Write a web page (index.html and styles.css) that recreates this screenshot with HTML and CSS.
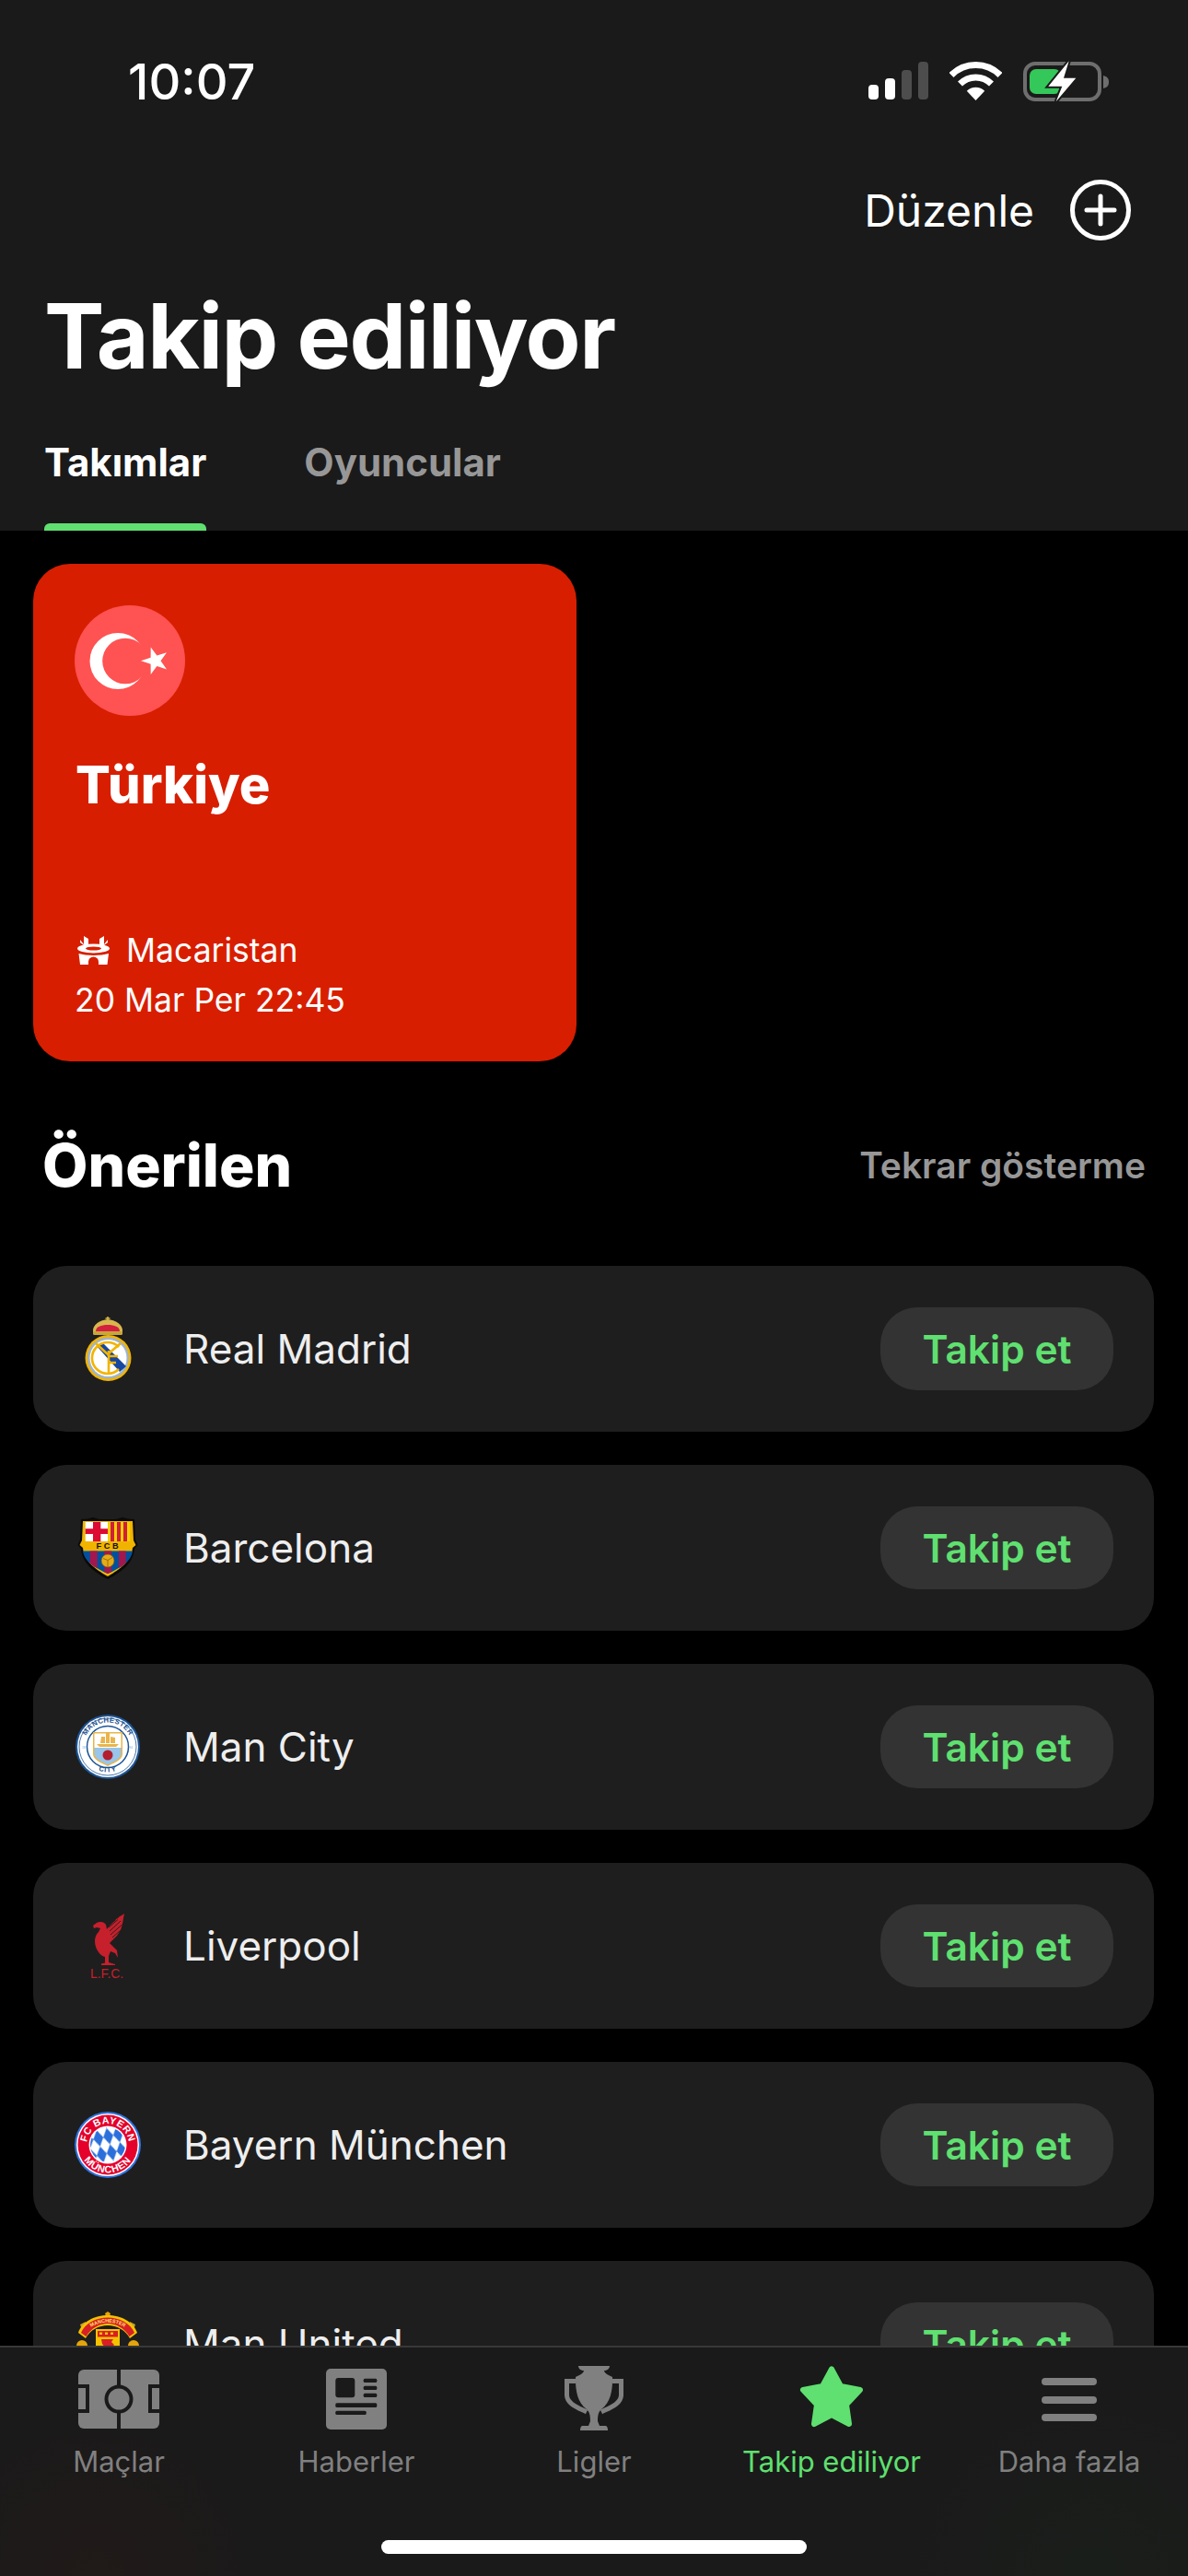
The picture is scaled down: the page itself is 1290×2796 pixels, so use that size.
FILE: index.html
```html
<!DOCTYPE html>
<html>
  <head>
    <title>Takip ediliyor</title>
    <link rel="stylesheet" href="styles.css">
  </head>
  <body>
    <div class="screen">
      <div class="header">
        <div class="status-bar">
          <span class="clock">10:07</span>
          <div class="status-icons">
            <svg class="signal" width="65" height="42" viewBox="0 0 65 42">
              <rect x="0" y="25" width="11" height="16" rx="4" fill="#fff"/>
              <rect x="18" y="18" width="11" height="23" rx="4" fill="#fff"/>
              <rect x="36" y="9" width="11" height="32" rx="4" fill="#4d4d4d"/>
              <rect x="54" y="0" width="11" height="41" rx="4" fill="#4d4d4d"/>
            </svg>
            <svg class="wifi" width="57" height="42" viewBox="0 0 57 42">
              <g fill="none" stroke="#fff" stroke-width="7">
                <path d="M2 14.500A37.500 37.500 0 0 1 55 14.500"/>
                <path d="M11.500 24A24 24 0 0 1 45.500 24"/>
              </g>
              <path d="M28.500 42L18.800 31.800A13.500 13.500 0 0 1 38.200 31.800Z" fill="#fff"/>
            </svg>
            <svg class="battery" width="93" height="45" viewBox="0 0 93 45">
              <rect x="2" y="3" width="81" height="39" rx="11" fill="none" stroke="#6e6e6e" stroke-width="4"/>
              <path d="M87 16C91 17 93 19 93 23C93 27 91 29 87 30Z" fill="#6e6e6e"/>
              <rect x="7" y="9" width="34" height="27" rx="7" fill="#34c759"/>
              <path d="M49.700 .3L27.300 27.700H42.300L35.700 44.300L57.300 18.700H44Z" fill="#fff" stroke="#1a1a1a" stroke-width="4" paint-order="stroke"/>
            </svg>
          </div>
        </div>
        <div class="header-actions">
          <span class="edit-link">Düzenle</span>
          <svg width="66" height="66" viewBox="0 0 66 66">
            <circle cx="33" cy="33" r="30.500" fill="none" stroke="#fff" stroke-width="5"/>
            <path d="M33 18V48M18 33H48" stroke="#fff" stroke-width="5" stroke-linecap="round"/>
          </svg>
        </div>
        <h1 class="page-title">Takip ediliyor</h1>
        <div class="tabs">
          <div class="tab tab-active">Takımlar<span class="tab-line"></span></div>
          <div class="tab">Oyuncular<span class="tab-line tab-line-off"></span></div>
        </div>
      </div>

      <div class="content">
        <div class="team-card">
          <svg class="flag" width="120" height="120" viewBox="0 0 120 120">
            <circle cx="60" cy="60" r="60" fill="#ff5252"/>
            <circle cx="47" cy="60.500" r="30.500" fill="#fff"/>
            <circle cx="55" cy="60.500" r="24.800" fill="#ff5252"/>
            <polygon points="72,60.300 82.600,56.800 82.700,45.600 89.400,54.600 100,51.200 93.500,60.300 100,69.400 89.400,66 82.700,75 82.600,63.800" fill="#fff"/>
          </svg>
          <div class="team-name">Türkiye</div>
          <div class="next-match">
            <div class="match-line">
              <svg class="stadium" width="36" height="32" viewBox="0 0 36 32">
                <path d="M7 1L12 4V10H24V4L29 1L29 10L33 5V8L29 11H7L3 8V5L7 10Z" fill="#fff"/>
                <ellipse cx="17.500" cy="14.500" rx="17.500" ry="5" fill="#fff"/>
                <ellipse cx="17.500" cy="14.500" rx="8.500" ry="2" fill="#d81e00"/>
                <path d="M1.500 20C10 22.500 25 22.500 34 20L32.500 32H23V29A5.500 5.500 0 0 0 12 29V32H3Z" fill="#fff"/>
              </svg>
              <span>Macaristan</span>
            </div>
            <div class="match-line">20 Mar Per 22:45</div>
          </div>
        </div>

        <div class="section-head">
          <h2 class="section-title">Önerilen</h2>
          <span class="section-action">Tekrar gösterme</span>
        </div>

        <div class="team-list">
          <div class="team-row">
            <svg class="crest" width="72" height="72" viewBox="0 0 72 72">
              <path d="M20 18C19 9 28 5 36 4C44 5 53 9 52 18L50 20H22Z" fill="#d8b84e"/>
              <path d="M23 17C23 12 29 10 36 10C43 10 49 12 49 17Z" fill="#d3213f"/>
              <path d="M36 1V8M33.500 3H38.500" stroke="#d8b84e" stroke-width="1.500"/>
              <rect x="20" y="17" width="32" height="4" rx="1.500" fill="#c9a63a"/>
              <circle cx="36.500" cy="46" r="25" fill="#f2b400"/>
              <circle cx="36.500" cy="46" r="22.500" fill="#9fb4cc"/>
              <circle cx="36.500" cy="46" r="20" fill="#fff"/>
              <path d="M24 33L30 29L56 55L49 61Z" fill="#17479e"/>
              <g fill="none" stroke="#f2b400" stroke-width="2.600">
                <path d="M48 34A17 17 0 1 0 48 58"/>
                <path d="M23 30L36 42L50 30"/>
                <path d="M37 38V62M37 44H47M37 51H45"/>
              </g>
            </svg>
            <span class="team-label">Real Madrid</span>
            <span class="follow-btn">Takip et</span>
          </div>

          <div class="team-row">
            <svg class="crest" width="72" height="72" viewBox="0 0 72 72">
              <path d="M7 5L14 4.500L20 3L27 5H45L52 3L58 4.500L65 5L66 27L68.500 33L65 37C64 52 52 62 36 70C20 62 8 52 7 37L3.500 33L6 27Z" fill="#0a0a0a"/>
              <path d="M9 7H63L64 28L66.500 33L63 36C62 50 50 59 36 67C22 59 10 50 9 36L5.500 33L8 28Z" fill="#f0b400"/>
              <rect x="11.700" y="8" width="24.500" height="21" fill="#fff"/>
              <path d="M20 8H28.300V29H20ZM11.700 15.300H36.200V21H11.700Z" fill="#dd0a34"/>
              <rect x="36.200" y="8" width="24" height="21" fill="#f7d000"/>
              <path d="M39 8H43V29H39ZM46 8H50V29H46ZM53 8H57V29H53Z" fill="#cf1f3a"/>
              <text class="crest-text" x="36.800" y="37.300" font-size="9.200" font-weight="700" fill="#111" text-anchor="middle" letter-spacing="2.600">FCB</text>
              <clipPath id="barca-low"><path d="M9 39.500H63C62 50 50 58 36 64C22 58 10 50 9 39.500Z"/></clipPath>
              <g clip-path="url(#barca-low)">
                <rect x="9" y="39" width="54" height="26" fill="#00509e"/>
                <path d="M16.700 39H24.700V65H16.700ZM32.300 39H40V65H32.300ZM48 39H55.700V65H48Z" fill="#a3174f"/>
              </g>
              <circle cx="36" cy="50" r="7" fill="#e6ab1a" stroke="#7c5a00" stroke-width=".6"/>
              <path d="M31 47.500L36 49.500L41 46.500M36 49.500V56.500" stroke="#7c5a00" stroke-width=".7" fill="none"/>
            </svg>
            <span class="team-label">Barcelona</span>
            <span class="follow-btn">Takip et</span>
          </div>

          <div class="team-row">
            <svg class="crest" width="72" height="72" viewBox="0 0 72 72">
              <circle cx="36" cy="36" r="35" fill="#1c5596"/>
              <circle cx="36" cy="36" r="33" fill="#fff"/>
              <circle cx="36" cy="36" r="31" fill="#fff" stroke="#1c5596" stroke-width=".8"/>
              <circle cx="36" cy="36" r="22.500" fill="#fff" stroke="#1c5596" stroke-width="1.500"/>
              <path id="city-top" d="M9.500 36A26.500 26.500 0 0 1 62.500 36" fill="none"/>
              <path id="city-bottom" d="M16 55A28 28 0 0 0 56 55" fill="none"/>
              <text class="crest-text" font-size="7.800" font-weight="700" fill="#1c4f8c" letter-spacing=".3"><textPath href="#city-top" startOffset="50%" text-anchor="middle">MANCHESTER</textPath></text>
              <text class="crest-text" font-size="7.500" font-weight="700" fill="#1c4f8c" letter-spacing=".8"><textPath href="#city-bottom" startOffset="50%" text-anchor="middle">CITY</textPath></text>
              <text class="crest-text" x="8" y="38" font-size="3.500" fill="#6aaee0">18</text>
              <text class="crest-text" x="59" y="38" font-size="3.500" fill="#6aaee0">94</text>
              <path d="M20 20H52V44C52 50 42 54 36 57C30 54 20 50 20 44Z" fill="#e8b54a"/>
              <path d="M21.500 21.500H50.500V37H21.500Z" fill="#fff"/>
              <path d="M21.500 37H50.500V44C50.500 49 41 53 36 55.500C31 53 21.500 49 21.500 44Z" fill="#98c5e9"/>
              <path d="M24 33H48L45 36H27ZM28 32L29 25H33V32ZM34 32V21H38V32ZM39 32V25L44 26V32Z" fill="#eab54b"/>
              <circle cx="36" cy="45" r="5.500" fill="#b21f2e"/>
            </svg>
            <span class="team-label">Man City</span>
            <span class="follow-btn">Takip et</span>
          </div>

          <div class="team-row">
            <svg class="crest" width="72" height="72" viewBox="0 0 72 72">
              <path d="M20 14L24 11C28 9 32 10 34 13L35 18C38 14 42 10 44 9L45 7L47 6L49 4L51 3L54 1L53 6L52 12L50 19L46 25L41 30L38 33L42 37L46 41L47 49L44 44L39 42L37 47L37 54L44 56V57H29V55.500L33 54.500L33 48C29 47 25 43 23 37C21 31 22 25 26 21L28 17L24 16L21 17Z" fill="#c5202c"/>
              <path d="M37 16L47 7.500M38 20L50 9M39 24L51.500 13M41 27L50 19" stroke="#1e1e1e" stroke-width=".9"/>
              <text class="crest-text" x="17" y="71" font-size="14.500" fill="#c5202c" textLength="36" lengthAdjust="spacingAndGlyphs">L.F.C.</text>
            </svg>
            <span class="team-label">Liverpool</span>
            <span class="follow-btn">Takip et</span>
          </div>

          <div class="team-row">
            <svg class="crest" width="72" height="72" viewBox="0 0 72 72">
              <defs>
                <pattern id="bavaria" width="11" height="18" patternUnits="userSpaceOnUse" patternTransform="rotate(-12 36 36)">
                  <rect width="11" height="18" fill="#fff"/>
                  <path d="M5.500 0L11 9L5.500 18L0 9Z" fill="#2a6fdb"/>
                </pattern>
              </defs>
              <circle cx="36" cy="36" r="36" fill="#2f74e0"/>
              <circle cx="36" cy="36" r="34" fill="#fff"/>
              <circle cx="36" cy="36" r="32.500" fill="#e4002b"/>
              <circle cx="36" cy="36" r="20.500" fill="#fff"/>
              <circle cx="36" cy="36" r="19" fill="url(#bavaria)"/>
              <path id="bayern-top" d="M14.400 43.900A23 23 0 1 1 57.600 43.900" fill="none"/>
              <path id="bayern-bottom" d="M7.300 25.600A30.500 30.500 0 1 0 64.700 25.600" fill="none"/>
              <text class="crest-text" font-size="10.800" font-weight="700" fill="#fff" letter-spacing=".5"><textPath href="#bayern-top" startOffset="50%" text-anchor="middle">FC BAYERN</textPath></text>
              <text class="crest-text" font-size="10.800" font-weight="700" fill="#fff" letter-spacing=".8"><textPath href="#bayern-bottom" startOffset="50%" text-anchor="middle">MÜNCHEN</textPath></text>
            </svg>
            <span class="team-label">Bayern München</span>
            <span class="follow-btn">Takip et</span>
          </div>

          <div class="team-row">
            <svg class="crest" width="72" height="72" viewBox="0 0 72 72">
              <circle cx="8" cy="38" r="6" fill="#e5a50a"/>
              <circle cx="64" cy="38" r="6" fill="#e5a50a"/>
              <path d="M6 15L12 12L13 18L8 21ZM66 15L60 12L59 18L64 21Z" fill="#c9a227"/>
              <path d="M33 3L36 1L39 3L38 6H34Z" fill="#e5a50a"/>
              <path d="M4 24C8 12 22 5 36 5C50 5 64 12 68 24L60 30C55 21 46 16 36 16C26 16 17 21 12 30Z" fill="#f4c200"/>
              <path d="M7 24C11 14 23 7.500 36 7.500C49 7.500 61 14 65 24L59.500 28C54 19 45 14 36 14C27 14 18 19 12.500 28Z" fill="#d81f26"/>
              <path id="utd-line" d="M10.500 26C15 17 26 12.800 36 12.800C46 12.800 57 17 61.500 26" fill="none"/>
              <text class="crest-text" font-size="5.400" font-weight="700" fill="#ffe36b"><textPath href="#utd-line" startOffset="50%" text-anchor="middle">MANCHESTER</textPath></text>
              <rect x="23" y="20" width="26" height="30" fill="#f4c200"/>
              <rect x="25" y="22" width="22" height="6.500" fill="#d81f26"/>
              <path d="M27 23.500H30V26H27ZM33 23.500H36V26H33ZM39 23.500H42V26H39Z" fill="#f4c200"/>
              <path d="M29 31H42L40 34L43 37L40 40H33L30 36Z" fill="#d81f26"/>
            </svg>
            <span class="team-label">Man United</span>
            <span class="follow-btn">Takip et</span>
          </div>
        </div>
      </div>

      <div class="tab-bar">
        <div class="tab-items">
          <div class="tab-item">
            <svg width="88" height="72" viewBox="0 0 88 72">
              <rect x="0" y="4" width="88" height="64" rx="6" fill="#808080"/>
              <path d="M44 4V68M0 22H10V49H0M88 22H78V49H88" fill="none" stroke="#1a1a1a" stroke-width="4"/>
              <circle cx="44" cy="36" r="13.500" fill="#808080" stroke="#1a1a1a" stroke-width="4"/>
            </svg>
            <span>Maçlar</span>
          </div>
          <div class="tab-item">
            <svg width="88" height="72" viewBox="0 0 88 72">
              <rect x="11" y="3" width="66" height="66" rx="5" fill="#808080"/>
              <rect x="21.300" y="13" width="21" height="21.300" rx="3" fill="#1a1a1a"/>
              <rect x="51.700" y="13.700" width="14.600" height="4.300" rx="1.500" fill="#1a1a1a"/>
              <rect x="51.700" y="21.700" width="14.600" height="4.300" rx="1.500" fill="#1a1a1a"/>
              <rect x="51.700" y="29.700" width="14.600" height="4.300" rx="1.500" fill="#1a1a1a"/>
              <rect x="21.300" y="40.300" width="45" height="4.600" rx="1.500" fill="#1a1a1a"/>
              <rect x="21.300" y="48.700" width="33.400" height="4.300" rx="1.500" fill="#1a1a1a"/>
            </svg>
            <span>Haberler</span>
          </div>
          <div class="tab-item">
            <svg width="88" height="72" viewBox="0 0 88 72">
              <path d="M27 0H61C61 3 58 5 55 5C55 8 60 10 64 12V16C64 26 62 40 52 47C49 50 48 53 48 60L50 65H57C59 66 59 69 59 70H29C29 69 29 66 31 65H38L40 60C40 53 39 50 36 47C26 40 24 26 24 16V12C28 10 33 8 33 5C30 5 27 3 27 0Z" fill="#808080"/>
              <path d="M24 16.500H14.500V32C15 41 26 45 36 50M64 16.500H73.500V32C73 41 62 45 52 50" fill="none" stroke="#808080" stroke-width="5"/>
            </svg>
            <span>Ligler</span>
          </div>
          <div class="tab-item tab-item-active">
            <svg width="88" height="72" viewBox="0 0 88 72">
              <path d="M44 3.500L54 22L75 26L60 42L63 63L44 53L25 63L28 42L13 26L34 22Z" fill="#5fe070" stroke="#5fe070" stroke-width="6" stroke-linejoin="round"/>
            </svg>
            <span>Takip ediliyor</span>
          </div>
          <div class="tab-item">
            <svg width="88" height="72" viewBox="0 0 88 72">
              <rect x="14" y="13" width="60" height="8" rx="4" fill="#808080"/>
              <rect x="14" y="33" width="60" height="8" rx="4" fill="#808080"/>
              <rect x="14" y="52" width="60" height="8" rx="4" fill="#808080"/>
            </svg>
            <span>Daha fazla</span>
          </div>
        </div>
        <div class="home-indicator"></div>
      </div>
    </div>
  </body>
</html>
```

FILE: styles.css
```css
* {
  box-sizing: border-box;
}

body {
  margin: 0;
  background-color: #000;
  font-family: Inter, "Noto Sans", sans-serif;
  color: #fff;
}

.screen {
  position: relative;
  width: 1290px;
  height: 2796px;
  overflow: hidden;
  background-color: #000;
}

.header {
  height: 576px;
  background-color: #1a1a1a;
}

.status-bar {
  display: flex;
  align-items: center;
  justify-content: space-between;
  height: 176px;
  padding: 0 86px 0 139px;
}

.clock {
  font-size: 54px;
  font-weight: 500;
}

.status-icons {
  display: flex;
  align-items: center;
  gap: 23px;
}

.header-actions {
  display: flex;
  align-items: center;
  justify-content: flex-end;
  gap: 39px;
  height: 104px;
  padding-right: 62px;
}

.edit-link {
  font-size: 48px;
}

.page-title {
  margin: 25px 0 0;
  padding-left: 48px;
  font-size: 98px;
  font-weight: 700;
  letter-spacing: -1.5px;
  line-height: 120px;
}

.tabs {
  display: flex;
  gap: 106px;
  padding-left: 48px;
}

.tab {
  padding-top: 52px;
  font-size: 42px;
  font-weight: 700;
  line-height: 50px;
  color: #979797;
}

.tab-active {
  color: #fff;
}

.tab-line {
  display: block;
  height: 8px;
  margin-top: 41px;
  border-radius: 6px 6px 0 0;
  background-color: #5fe070;
}

.tab-line-off {
  background-color: transparent;
}

.content {
  padding: 36px 37px 0 36px;
}

.team-card {
  display: flex;
  flex-direction: column;
  width: 590px;
  height: 540px;
  padding: 45px 45px 40px 45px;
  border-radius: 40px;
  background-color: #d81e00;
}

.flag {
  flex: none;
}

.team-name {
  margin: 40px 0 0 1px;
  font-size: 56px;
  font-weight: 800;
  line-height: 70px;
}

.next-match {
  margin-top: auto;
}

.match-line {
  display: flex;
  align-items: center;
  gap: 17px;
  height: 54px;
  font-size: 35.500px;
}

.stadium {
  margin-left: 3px;
}

.section-head {
  display: flex;
  align-items: center;
  justify-content: space-between;
  height: 100px;
  margin: 62px 9px 60px 10px;
}

.section-title {
  margin: 0;
  font-size: 64px;
  font-weight: 800;
}

.section-action {
  font-size: 39px;
  font-weight: 600;
  color: #979797;
}

.team-list {
  display: flex;
  flex-direction: column;
  gap: 36px;
}

.team-row {
  display: flex;
  align-items: center;
  gap: 46px;
  height: 180px;
  padding: 0 44px 0 45px;
  border-radius: 36px;
  background-color: #1e1e1e;
}

.crest {
  flex: none;
}

.crest-text {
  font-family: "Liberation Sans", sans-serif;
}

.team-label {
  flex: 1;
  font-size: 44px;
  color: #eeeeee;
}

.follow-btn {
  display: flex;
  align-items: center;
  justify-content: center;
  width: 253px;
  height: 90px;
  border-radius: 40px;
  background-color: #333;
  font-size: 42.500px;
  font-weight: 600;
  color: #5fe070;
}

.tab-bar {
  position: absolute;
  left: 0;
  right: 0;
  bottom: 0;
  height: 250px;
  border-top: 2px solid #383838;
  background-color: #1a1a1a;
  background-image: radial-gradient(circle at 8% 100%, rgba(70, 25, 15, 0.14), transparent 16%),
    radial-gradient(circle at 92% 100%, rgba(25, 60, 30, 0.12), transparent 16%);
}

.tab-items {
  display: grid;
  grid-template-columns: repeat(5, 1fr);
  padding-top: 20px;
}

.tab-item {
  display: flex;
  flex-direction: column;
  align-items: center;
  gap: 12px;
  font-size: 31px;
  line-height: 40px;
  color: #808080;
}

.tab-item-active {
  color: #5fe070;
}

.home-indicator {
  width: 462px;
  height: 15px;
  margin: 65px auto 0;
  border-radius: 8px;
  background-color: #fff;
}
```
